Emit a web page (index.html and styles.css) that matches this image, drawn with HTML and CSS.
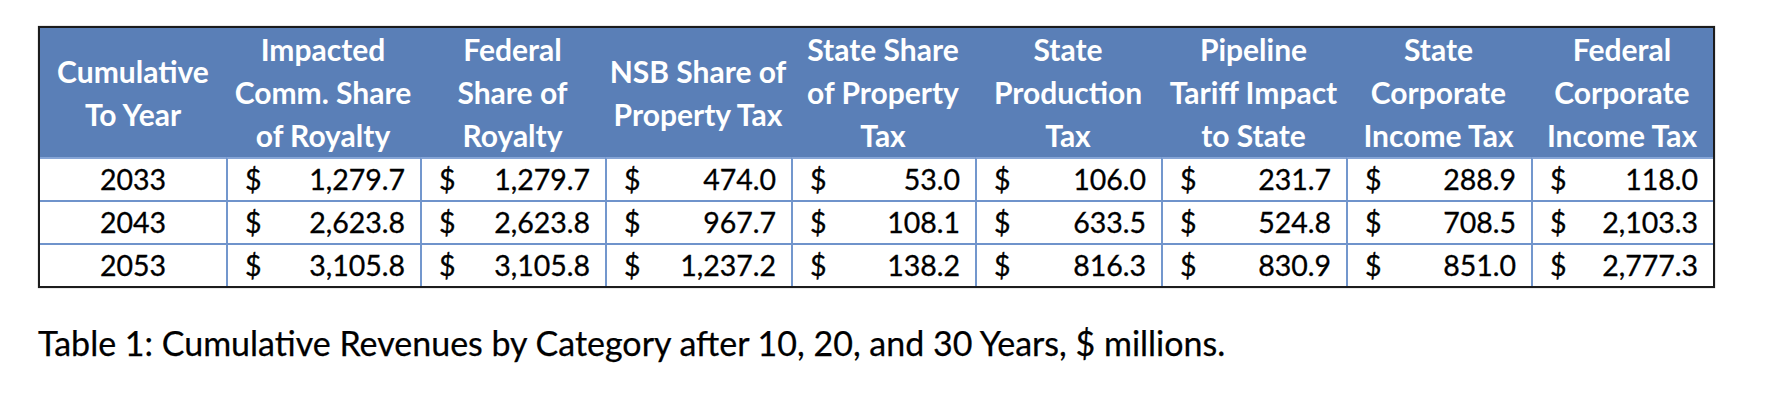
FILE: index.html
```html
<!DOCTYPE html>
<html lang="en">
<head>
<meta charset="utf-8">
<title>Cumulative Revenues by Category</title>
<link rel="stylesheet" href="styles.css">
</head>
<body>
<div class="page">
  <table class="rev">
    <colgroup>
      <col class="c1"><col class="c2"><col class="c3"><col class="c4"><col class="c5"><col class="c6"><col class="c7"><col class="c8"><col class="c9">
    </colgroup>
    <thead>
      <tr>
        <th>Cumulative<br>To Year</th>
        <th>Impacted<br>Comm. Share<br>of Royalty</th>
        <th>Federal<br>Share of<br>Royalty</th>
        <th>NSB Share of<br>Property Tax</th>
        <th>State Share<br>of Property<br>Tax</th>
        <th>State<br>Production<br>Tax</th>
        <th>Pipeline<br>Tariff Impact<br>to State</th>
        <th>State<br>Corporate<br>Income Tax</th>
        <th>Federal<br>Corporate<br>Income Tax</th>
      </tr>
    </thead>
    <tbody>
      <tr>
        <td class="yr">2033</td>
        <td><div class="money"><span>$</span><span>1,279.7</span></div></td>
        <td><div class="money"><span>$</span><span>1,279.7</span></div></td>
        <td><div class="money"><span>$</span><span>474.0</span></div></td>
        <td><div class="money"><span>$</span><span>53.0</span></div></td>
        <td><div class="money"><span>$</span><span>106.0</span></div></td>
        <td><div class="money"><span>$</span><span>231.7</span></div></td>
        <td><div class="money"><span>$</span><span>288.9</span></div></td>
        <td><div class="money"><span>$</span><span>118.0</span></div></td>
      </tr>
      <tr>
        <td class="yr">2043</td>
        <td><div class="money"><span>$</span><span>2,623.8</span></div></td>
        <td><div class="money"><span>$</span><span>2,623.8</span></div></td>
        <td><div class="money"><span>$</span><span>967.7</span></div></td>
        <td><div class="money"><span>$</span><span>108.1</span></div></td>
        <td><div class="money"><span>$</span><span>633.5</span></div></td>
        <td><div class="money"><span>$</span><span>524.8</span></div></td>
        <td><div class="money"><span>$</span><span>708.5</span></div></td>
        <td><div class="money"><span>$</span><span>2,103.3</span></div></td>
      </tr>
      <tr>
        <td class="yr">2053</td>
        <td><div class="money"><span>$</span><span>3,105.8</span></div></td>
        <td><div class="money"><span>$</span><span>3,105.8</span></div></td>
        <td><div class="money"><span>$</span><span>1,237.2</span></div></td>
        <td><div class="money"><span>$</span><span>138.2</span></div></td>
        <td><div class="money"><span>$</span><span>816.3</span></div></td>
        <td><div class="money"><span>$</span><span>830.9</span></div></td>
        <td><div class="money"><span>$</span><span>851.0</span></div></td>
        <td><div class="money"><span>$</span><span>2,777.3</span></div></td>
      </tr>
    </tbody>
  </table>
  <p class="caption">Table 1: Cumulative Revenues by Category after 10, 20, and 30 Years, $ millions.</p>
</div>
</body>
</html>
```

FILE: styles.css
```css
html, body {
  margin: 0;
  padding: 0;
  background: #ffffff;
}

body {
  width: 1770px;
  height: 420px;
  overflow: hidden;
  font-family: Lato, "Open Sans", sans-serif;
  color: #000000;
}

.page {
  padding: 26px 0 0 38px;
}

.rev {
  border-collapse: separate;
  border-spacing: 0;
  table-layout: fixed;
  width: 1677px;
  border: 2px solid #1c1c1c;
  box-shadow: 0 0 1px rgba(0, 0, 0, 0.5);
}

.c1 { width: 186px; }
.c2 { width: 194px; }
.c3 { width: 185px; }
.c4 { width: 186px; }
.c5 { width: 184px; }
.c6 { width: 186px; }
.c7 { width: 185px; }
.c8 { width: 185px; }
.c9 { width: 182px; }

.rev th {
  background: #5a7fb7;
  color: #ffffff;
  font-weight: 700;
  font-size: 30px;
  line-height: 43px;
  height: 129px;
  padding: 0;
  text-align: center;
  vertical-align: middle;
  white-space: nowrap;
}

.rev td {
  height: 41px;
  padding: 0 15px 0 17px;
  border-top: 2px solid #6f93cb;
  border-left: 2px solid #7397cd;
  font-size: 28.5px;
  line-height: 41px;
  vertical-align: middle;
  white-space: nowrap;
  -webkit-text-stroke: 0.3px #000000;
}

.rev tbody tr:first-child td {
  border-top-color: #86a5d6;
}

.rev td.yr {
  border-left: none;
  padding: 0;
  text-align: center;
}

.money {
  display: flex;
  justify-content: space-between;
  align-items: baseline;
}

.caption {
  margin: 36px 0 0 0;
  font-size: 34px;
  line-height: 38px;
  -webkit-text-stroke: 0.25px #000000;
}
```
